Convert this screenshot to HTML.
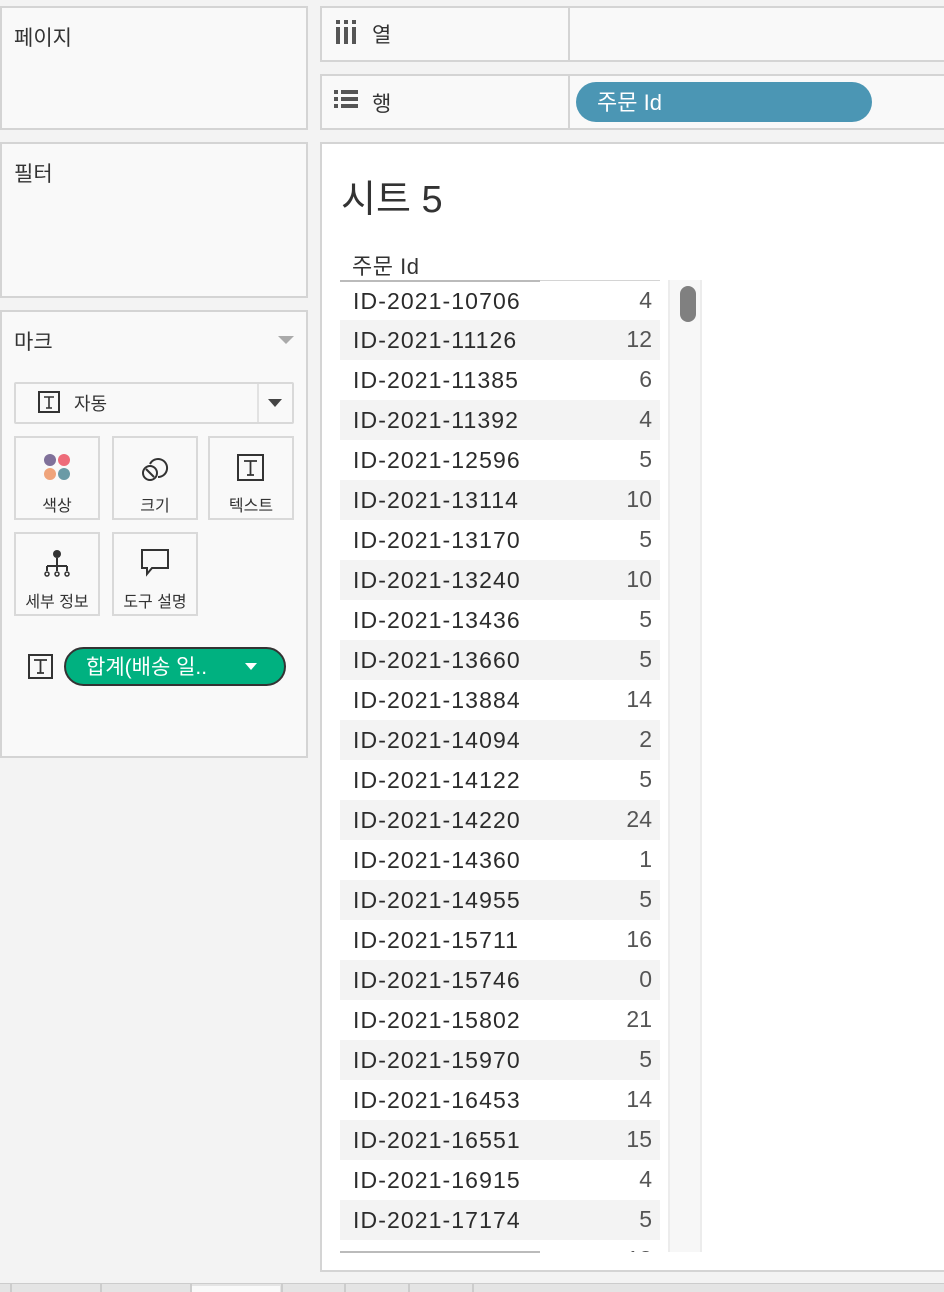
<!DOCTYPE html>
<html><head><meta charset="utf-8"><style>
*{box-sizing:border-box;margin:0;padding:0}
body{width:944px;height:1292px;background:#f3f3f3;position:relative;overflow:hidden;font-family:"Liberation Sans","Noto Sans CJK KR",sans-serif;color:#333}
.box{position:absolute;background:#f9f9f9;border:2px solid #d4d4d4}
.lbl{position:absolute;font-size:21px;color:#333}
.card{position:absolute;width:86px;height:84px;border:2px solid #d9d9d9;background:#f9f9f9;text-align:center;font-size:16px}
.card span{position:absolute;left:0;right:0;top:54px}
.row{position:absolute;left:340px;width:320px;height:40px;font-size:23px;color:#2b2b2b}
.row .a{position:absolute;left:13px;top:7px;letter-spacing:1.1px}
.row .b{position:absolute;right:8px;top:6px;color:#555}
.g{background:#f3f3f3}
</style></head><body>
<div class="box" style="left:0;top:6px;width:308px;height:124px"></div>
<div class="lbl" style="left:14px;top:22px">페이지</div>
<div class="box" style="left:0;top:142px;width:308px;height:156px"></div>
<div class="lbl" style="left:14px;top:158px">필터</div>
<div class="box" style="left:0;top:310px;width:308px;height:448px"></div>
<div class="lbl" style="left:14px;top:326px">마크</div>
<div style="position:absolute;left:278px;top:336px;border-left:8px solid transparent;border-right:8px solid transparent;border-top:8px solid #aaa"></div>
<div style="position:absolute;left:14px;top:382px;width:280px;height:42px;border:2px solid #d9d9d9;background:#f9f9f9;border-radius:2px"></div>
<div style="position:absolute;left:257px;top:384px;width:2px;height:38px;background:#e2e2e2"></div>
<div style="position:absolute;left:268px;top:399px;border-left:7px solid transparent;border-right:7px solid transparent;border-top:8px solid #444"></div>
<svg style="position:absolute;left:38px;top:391px" width="22" height="22"><rect x="1" y="1" width="20" height="20" fill="none" stroke="#333" stroke-width="2"/><path d="M6 6h10M11 6v11M8 17h6" stroke="#333" stroke-width="1.6" fill="none"/></svg>
<div style="position:absolute;left:74px;top:390px;font-size:18px">자동</div>
<div class="card" style="left:14px;top:436px"><svg style="position:absolute;left:26px;top:14px" width="30" height="30"><circle cx="8" cy="8" r="6" fill="#80719a"/><circle cx="22" cy="8" r="6" fill="#ee6c7a"/><circle cx="8" cy="22" r="6" fill="#efa47b"/><circle cx="22" cy="22" r="6" fill="#6a9aa6"/></svg><span>색상</span></div>
<div class="card" style="left:112px;top:436px"><svg style="position:absolute;left:26px;top:14px" width="32" height="32"><path d="M10 12 A9 9 0 1 1 18 25" fill="none" stroke="#333" stroke-width="2"/><circle cx="10" cy="21" r="7" fill="none" stroke="#333" stroke-width="2"/><path d="M6 17l8 8" stroke="#333" stroke-width="2"/></svg><span>크기</span></div>
<div class="card" style="left:208px;top:436px"><svg style="position:absolute;left:27px;top:16px" width="28" height="28"><rect x="1" y="1" width="25" height="25" fill="none" stroke="#333" stroke-width="2"/><path d="M7 7h13M13.5 7v14M10 21h7" stroke="#333" stroke-width="1.8" fill="none"/></svg><span>텍스트</span></div>
<div class="card" style="left:14px;top:532px"><svg style="position:absolute;left:26px;top:14px" width="30" height="30"><circle cx="15" cy="6" r="4" fill="#333"/><path d="M15 10v8M5 18h20M5 18v5M15 18v5M25 18v5" stroke="#333" stroke-width="2" fill="none"/><circle cx="5" cy="26" r="2" fill="none" stroke="#333" stroke-width="1.5"/><circle cx="15" cy="26" r="2" fill="none" stroke="#333" stroke-width="1.5"/><circle cx="25" cy="26" r="2" fill="none" stroke="#333" stroke-width="1.5"/></svg><span>세부 정보</span></div>
<div class="card" style="left:112px;top:532px"><svg style="position:absolute;left:26px;top:14px" width="32" height="30"><path d="M2 2h26v18H12l-5 6v-6H2z" fill="none" stroke="#333" stroke-width="2"/></svg><span>도구 설명</span></div>
<svg style="position:absolute;left:28px;top:654px" width="26" height="26"><rect x="1" y="1" width="23" height="23" fill="none" stroke="#333" stroke-width="2"/><path d="M6 6h13M12.5 6v13M9 19h7" stroke="#333" stroke-width="1.8" fill="none"/></svg>
<div style="position:absolute;left:64px;top:647px;width:222px;height:39px;border-radius:20px;background:#00b180;border:2px solid #333;color:#fff;font-size:21px;padding:2px 0 0 20px">합계(배송 일..</div>
<div style="position:absolute;left:245px;top:663px;border-left:6px solid transparent;border-right:6px solid transparent;border-top:7px solid #fff"></div>

<div class="box" style="left:320px;top:6px;width:630px;height:56px"></div>
<div style="position:absolute;left:568px;top:6px;width:2px;height:56px;background:#d4d4d4"></div>
<svg style="position:absolute;left:336px;top:20px" width="22" height="24"><rect x="0" y="0" width="4" height="4" fill="#555"/><rect x="8" y="0" width="4" height="4" fill="#555"/><rect x="16" y="0" width="4" height="4" fill="#555"/><rect x="0" y="7" width="4" height="17" fill="#555"/><rect x="8" y="7" width="4" height="17" fill="#555"/><rect x="16" y="7" width="4" height="17" fill="#555"/></svg>
<div class="lbl" style="left:372px;top:19px">열</div>
<div class="box" style="left:320px;top:74px;width:630px;height:56px"></div>
<div style="position:absolute;left:568px;top:74px;width:2px;height:56px;background:#d4d4d4"></div>
<svg style="position:absolute;left:334px;top:90px" width="26" height="20"><rect x="0" y="0" width="4" height="4" fill="#555"/><rect x="7" y="0" width="17" height="4" fill="#555"/><rect x="0" y="7" width="4" height="4" fill="#555"/><rect x="7" y="7" width="17" height="4" fill="#555"/><rect x="0" y="14" width="4" height="4" fill="#555"/><rect x="7" y="14" width="17" height="4" fill="#555"/></svg>
<div class="lbl" style="left:372px;top:88px">행</div>
<div style="position:absolute;left:576px;top:82px;width:296px;height:40px;border-radius:20px;background:#4b96b4;color:#fff;font-size:22px;padding:3px 0 0 21px">주문 Id</div>

<div style="position:absolute;left:320px;top:142px;width:630px;height:1130px;background:#fff;border:2px solid #d4d4d4"></div>
<div style="position:absolute;left:341px;top:168px;font-size:38px;color:#333">시트 5</div>
<div style="position:absolute;left:352px;top:249px;font-size:22px;color:#333;letter-spacing:0.5px">주문 Id</div>
<div style="position:absolute;left:340px;top:280px;width:200px;height:2px;background:#bbb"></div>
<div style="position:absolute;left:540px;top:280px;width:120px;height:1px;background:#d4d4d4"></div>
<div style="position:absolute;left:668px;top:280px;width:34px;height:972px;background:#f7f7f7;border-left:2px solid #ececec;border-right:2px solid #ececec"></div>
<div style="position:absolute;left:680px;top:286px;width:16px;height:36px;border-radius:8px;background:#808080"></div>
<div style="position:absolute;left:0;top:0;width:944px;height:1252px;overflow:hidden;pointer-events:none">
<div class="row" style="top:281px"><span class="a">ID-2021-10706</span><span class="b">4</span></div>
<div class="row g" style="top:320px"><span class="a">ID-2021-11126</span><span class="b">12</span></div>
<div class="row" style="top:360px"><span class="a">ID-2021-11385</span><span class="b">6</span></div>
<div class="row g" style="top:400px"><span class="a">ID-2021-11392</span><span class="b">4</span></div>
<div class="row" style="top:440px"><span class="a">ID-2021-12596</span><span class="b">5</span></div>
<div class="row g" style="top:480px"><span class="a">ID-2021-13114</span><span class="b">10</span></div>
<div class="row" style="top:520px"><span class="a">ID-2021-13170</span><span class="b">5</span></div>
<div class="row g" style="top:560px"><span class="a">ID-2021-13240</span><span class="b">10</span></div>
<div class="row" style="top:600px"><span class="a">ID-2021-13436</span><span class="b">5</span></div>
<div class="row g" style="top:640px"><span class="a">ID-2021-13660</span><span class="b">5</span></div>
<div class="row" style="top:680px"><span class="a">ID-2021-13884</span><span class="b">14</span></div>
<div class="row g" style="top:720px"><span class="a">ID-2021-14094</span><span class="b">2</span></div>
<div class="row" style="top:760px"><span class="a">ID-2021-14122</span><span class="b">5</span></div>
<div class="row g" style="top:800px"><span class="a">ID-2021-14220</span><span class="b">24</span></div>
<div class="row" style="top:840px"><span class="a">ID-2021-14360</span><span class="b">1</span></div>
<div class="row g" style="top:880px"><span class="a">ID-2021-14955</span><span class="b">5</span></div>
<div class="row" style="top:920px"><span class="a">ID-2021-15711</span><span class="b">16</span></div>
<div class="row g" style="top:960px"><span class="a">ID-2021-15746</span><span class="b">0</span></div>
<div class="row" style="top:1000px"><span class="a">ID-2021-15802</span><span class="b">21</span></div>
<div class="row g" style="top:1040px"><span class="a">ID-2021-15970</span><span class="b">5</span></div>
<div class="row" style="top:1080px"><span class="a">ID-2021-16453</span><span class="b">14</span></div>
<div class="row g" style="top:1120px"><span class="a">ID-2021-16551</span><span class="b">15</span></div>
<div class="row" style="top:1160px"><span class="a">ID-2021-16915</span><span class="b">4</span></div>
<div class="row g" style="top:1200px"><span class="a">ID-2021-17174</span><span class="b">5</span></div>
<div class="row" style="top:1240px"><span class="a">ID-2021-17287</span><span class="b">13</span></div>
</div>
<div style="position:absolute;left:340px;top:1251px;width:200px;height:2px;background:#bbb"></div>

<div style="position:absolute;left:0;top:1283px;width:944px;height:9px;background:#e4e4e4;border-top:1px solid #ccc"></div>
<div style="position:absolute;left:190px;top:1286px;width:90px;height:6px;background:#f9f9f9"></div>
<div style="position:absolute;left:10px;top:1284px;width:2px;height:8px;background:#ccc"></div>
<div style="position:absolute;left:100px;top:1284px;width:2px;height:8px;background:#ccc"></div>
<div style="position:absolute;left:190px;top:1284px;width:2px;height:8px;background:#ccc"></div>
<div style="position:absolute;left:281px;top:1284px;width:2px;height:8px;background:#ccc"></div>
<div style="position:absolute;left:344px;top:1284px;width:2px;height:8px;background:#ccc"></div>
<div style="position:absolute;left:408px;top:1284px;width:2px;height:8px;background:#ccc"></div>
<div style="position:absolute;left:472px;top:1284px;width:2px;height:8px;background:#ccc"></div>
</body></html>
